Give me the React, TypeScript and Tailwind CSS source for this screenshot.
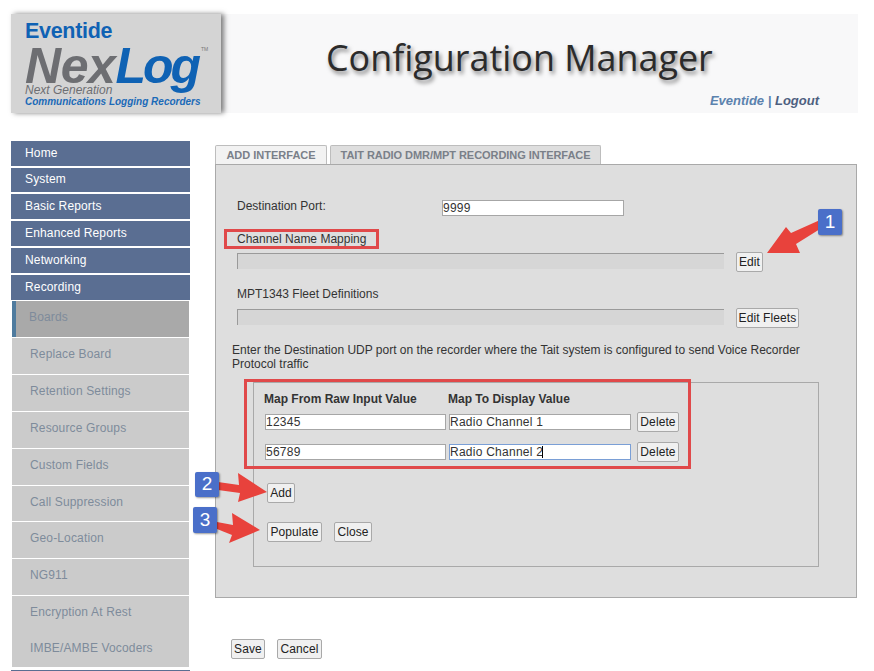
const TOP_NAV = [
  { label: 'Home', cls: 'h-[25px] mb-[2px]' },
  { label: 'System', cls: 'h-[24px] mb-[2px]' },
  { label: 'Basic Reports', cls: 'h-[25px] mb-[2px]' },
  { label: 'Enhanced Reports', cls: 'h-[25px] mb-[2px]' },
  { label: 'Networking', cls: 'h-[25px] mb-[2px]' },
  { label: 'Recording', cls: 'h-[25px] mb-px' },
];

const SUB_NAV = [
  { label: 'Replace Board', cls: 'h-[37px] border-b border-white' },
  { label: 'Retention Settings', cls: 'h-[37px] border-b border-white' },
  { label: 'Resource Groups', cls: 'h-[37px] border-b border-white' },
  { label: 'Custom Fields', cls: 'h-[37px] border-b border-white' },
  { label: 'Call Suppression', cls: 'h-[36px] border-b border-white' },
  { label: 'Geo-Location', cls: 'h-[37px] border-b border-white' },
  { label: 'NG911', cls: 'h-[37px] border-b border-white' },
  { label: 'Encryption At Rest', cls: 'h-[36px]' },
  { label: 'IMBE/AMBE Vocoders', cls: 'h-[35px]' },
];

function Btn({ children, className = '' }: { children: React.ReactNode; className?: string }) {
  return (
    <button className={`h-[20px] shrink-0 rounded-[2px] border border-[#a9a9a9] bg-[#f0f0f0] text-[12px] leading-none tracking-[0.1px] text-[#222] ${className}`}>
      {children}
    </button>
  );
}

function Field({ value, focused, className = '' }: { value: string; focused?: boolean; className?: string }) {
  return (
    <input
      readOnly
      value={value}
      className={`h-[16px] shrink-0 border bg-white text-[12px] leading-none tracking-[0.25px] text-[#333] outline-none ${focused ? 'border-[#7a9fd6]' : 'border-[#a6a6a6]'} ${className}`}
    />
  );
}

function Badge({ n, className }: { n: number; className: string }) {
  return (
    <div className={`absolute flex items-center justify-center rounded-[2px] bg-[#4a6fc9] text-[19px] text-white shadow-[1px_1px_2px_rgba(0,0,0,0.4)] ${className}`}>
      {n}
    </div>
  );
}

function Arrow({ points, className }: { points: string; className: string }) {
  return (
    <svg className={`absolute ${className}`} viewBox="0 0 80 50" width="80" height="50">
      <polygon points={points} fill="#e8423c" />
    </svg>
  );
}

export default function App() {
  return (
    <div className="relative h-[671px] w-[874px] overflow-hidden bg-white font-['Liberation_Sans',Arial,sans-serif]">
      {/* Header */}
      <header className="ml-[11px] flex h-[99px] w-[847px] translate-y-[14px] bg-[#f8f8f9]">
        <div className="flex h-[99px] w-[210px] shrink-0 flex-col bg-[#d4d4d4] pl-[14px] pt-[5px] shadow-[3px_0_5px_rgba(0,0,0,0.5)]">
          <div className="h-[24px] text-[21.5px] font-bold leading-[24px] tracking-[-0.3px] text-[#0f62b4]">Eventide</div>
          <div className="relative h-[41px] text-[50px] font-bold italic leading-[46px] tracking-[-0.4px]">
            <span className="text-[#6d6e72]">Nex</span>
            <span className="tracking-[-3px] text-[#0f62b4]">Log</span>
            <span className="absolute left-[176px] top-[4px] text-[5px] font-normal not-italic leading-none tracking-normal text-[#777]">TM</span>
          </div>
          <div className="h-[12px] text-[12px] italic leading-[12px] text-[#6d6e72]">Next Generation</div>
          <div className="text-[10px] font-bold italic leading-[11px] text-[#1b6ab8]">Communications Logging Recorders</div>
        </div>
        <div className="flex flex-1 flex-col pr-[39px]">
          <div className="pl-[105px] pt-[21px] font-['Open_Sans',sans-serif] text-[35.9px] leading-[46px] text-[#2b2b2b] [text-shadow:2px_3px_4px_rgba(0,0,0,0.5)]">
            Configuration Manager
          </div>
          <div className="mt-[12px] self-end text-[13px] font-bold italic leading-[16px] text-[#4d5f80]">
            <span className="text-[#5b82ae]">Eventide | </span>Logout
          </div>
        </div>
      </header>

      <div className="ml-[11px] mt-[42px] flex">
        {/* Sidebar */}
        <nav className="w-[179px] shrink-0 text-[12px]">
          {TOP_NAV.map((item) => (
            <div key={item.label} className={`flex items-center bg-[#5a6e92] pb-[2px] pl-[14px] tracking-[0.15px] text-white ${item.cls}`}>
              {item.label}
            </div>
          ))}
          <div className="px-px tracking-[0.15px] text-[#7e8b9b]">
            <div className="flex h-[37px] border-b border-white bg-[#a9a9a9]">
              <div className="w-[4px] bg-[#4f7b9e]" />
              <div className="pl-[13px] pt-[9px] leading-[14px]">Boards</div>
            </div>
            {SUB_NAV.map((item) => (
              <div key={item.label} className={`bg-[#cbcbcb] pl-[18px] pt-[9px] leading-[14px] ${item.cls}`}>
                {item.label}
              </div>
            ))}
          </div>
          <div className="mt-[3px] h-px bg-[#5a6e92]" />
        </nav>

        {/* Main */}
        <main className="ml-[25px] mt-[4px] w-[642px] shrink-0 text-[12px] text-[#333]">
          <div className="flex h-[19px] gap-[3px] text-[11px] font-bold leading-[19px] text-[#7a8089]">
            <div className="w-[112px] rounded-t-[2px] border border-b-0 border-[#bdbdbd] bg-[#f2f2f2] text-center">ADD INTERFACE</div>
            <div className="w-[271px] rounded-t-[2px] border border-b-0 border-[#bdbdbd] bg-[#dedede] text-center tracking-[-0.06px]">TAIT RADIO DMR/MPT RECORDING INTERFACE</div>
          </div>
          <div className="h-[434px] border border-[#a9a9a9] bg-[#dedede] pl-[21px] pr-[33px] pt-[35px]">
            <div className="flex h-[16px] items-start">
              <span className="-mt-px w-[205px] leading-[14px]">Destination Port:</span>
              <Field value="9999" className="w-[182px]" />
            </div>
            <div className="mt-[16px] leading-[14px]">Channel Name Mapping</div>
            <div className="mt-[6px] flex h-[20px] items-start">
              <div className="mt-px h-[16px] w-[487px] border-l border-t border-[#9a9a9a] bg-[#d6d6d6]" />
              <Btn className="ml-[12px] w-[27px]">Edit</Btn>
            </div>
            <div className="mt-[15px] leading-[14px]">MPT1343 Fleet Definitions</div>
            <div className="mt-[7px] flex h-[20px] items-start">
              <div className="mt-px h-[16px] w-[487px] border-l border-t border-[#9a9a9a] bg-[#d6d6d6]" />
              <Btn className="ml-[12px] w-[63px]">Edit Fleets</Btn>
            </div>
            <p className="-ml-[5px] mt-[15px] w-[590px] leading-[14px]">
              Enter the Destination UDP port on the recorder where the Tait system is configured to send Voice Recorder Protocol traffic
            </p>
            <div className="ml-[16px] mt-[11px] h-[185px] w-[566px] border border-[#a9a9a9] pl-[10px] pt-[8px]">
              <div className="flex h-[16px] font-bold leading-[16px]">
                <span className="w-[184px]">Map From Raw Input Value</span>
                <span>Map To Display Value</span>
              </div>
              <div className="mt-[5px] flex h-[20px] items-center pl-px">
                <Field value="12345" className="w-[181px]" />
                <Field value="Radio Channel 1" className="ml-[3px] w-[182px]" />
                <Btn className="ml-[6px] w-[42px]">Delete</Btn>
              </div>
              <div className="mt-[10px] flex h-[20px] items-center pl-px">
                <Field value="56789" className="w-[181px]" />
                <div className="relative ml-[3px] flex">
                  <Field value="Radio Channel 2" focused className="w-[182px]" />
                  <span className="absolute left-[93px] top-[2px] h-[12px] w-px bg-black" />
                </div>
                <Btn className="ml-[6px] w-[42px]">Delete</Btn>
              </div>
              <div className="mt-[21px] pl-[3px]">
                <Btn className="block w-[28px]">Add</Btn>
              </div>
              <div className="mt-[19px] flex gap-[12px] pl-[3px]">
                <Btn className="w-[55px]">Populate</Btn>
                <Btn className="w-[38px]">Close</Btn>
              </div>
            </div>
          </div>
          <div className="ml-[16px] mt-[41px] flex gap-[12px]">
            <Btn className="w-[34px]">Save</Btn>
            <Btn className="w-[45px]">Cancel</Btn>
          </div>
        </main>
      </div>

      {/* Red callout boxes */}
      <div className="absolute left-[224px] top-[229px] h-[20px] w-[155px] border-[3px] border-[#e0494a]" />
      <div className="absolute left-[244px] top-[379px] h-[90px] w-[447px] border-[3px] border-[#e0494a]" />

      {/* Callout arrows */}
      <Arrow className="left-[760px] top-[220px]" points="7,33 26,7 31,13 60,0 60,9 36,24 40,33" />
      <Arrow className="left-[215px] top-[470px]" points="3,12 24,15 23,3 52,22 23,32 25,23 3,20" />
      <Arrow className="left-[215px] top-[510px]" points="2,12 18,15 17,3 45,20 14,33 17,25 2,19" />

      <Badge n={1} className="left-[818px] top-[209px] h-[26px] w-[24px]" />
      <Badge n={2} className="left-[195px] top-[472px] h-[25px] w-[24px]" />
      <Badge n={3} className="left-[193px] top-[507px] h-[26px] w-[24px]" />
    </div>
  );
}
